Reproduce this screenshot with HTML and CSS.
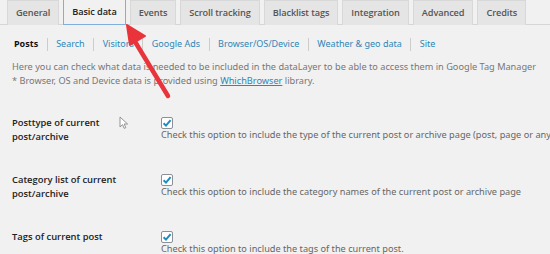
FILE: index.html
```html
<!DOCTYPE html>
<html>
<head>
<meta charset="utf-8">
<link rel="stylesheet" href="styles.css">
</head>
<body>
<div class="page">
  <nav class="tabs">
    <span class="tab">General</span>
    <span class="tab active">Basic data</span>
    <span class="tab">Events</span>
    <span class="tab">Scroll tracking</span>
    <span class="tab">Blacklist tags</span>
    <span class="tab">Integration</span>
    <span class="tab">Advanced</span>
    <span class="tab">Credits</span>
  </nav>
  <ul class="subnav">
    <li class="current">Posts</li>
    <li><a>Search</a></li>
    <li><a>Visitors</a></li>
    <li><a>Google Ads</a></li>
    <li><a>Browser/OS/Device</a></li>
    <li><a>Weather &amp; geo data</a></li>
    <li><a>Site</a></li>
  </ul>
  <p class="intro">Here you can check what data is needed to be included in the dataLayer to be able to access them in Google Tag Manager<br>* Browser, OS and Device data is provided using <a class="ul">WhichBrowser</a> library.</p>
  <div class="rows">
    <div class="row">
      <div class="label">Posttype of current post/archive</div>
      <div class="field">
        <span class="cb"><svg viewBox="0 0 12 12" width="12" height="12"><path d="M2.6 6.2 L5 8.6 L9.6 3.2" fill="none" stroke="#1e8cbe" stroke-width="2"/></svg></span>
        <span class="desc">Check this option to include the type of the current post or archive page (post, page or any custom post type)</span>
      </div>
    </div>
    <div class="row">
      <div class="label">Category list of current post/archive</div>
      <div class="field">
        <span class="cb"><svg viewBox="0 0 12 12" width="12" height="12"><path d="M2.6 6.2 L5 8.6 L9.6 3.2" fill="none" stroke="#1e8cbe" stroke-width="2"/></svg></span>
        <span class="desc">Check this option to include the category names of the current post or archive page</span>
      </div>
    </div>
    <div class="row">
      <div class="label">Tags of current post</div>
      <div class="field">
        <span class="cb"><svg viewBox="0 0 12 12" width="12" height="12"><path d="M2.6 6.2 L5 8.6 L9.6 3.2" fill="none" stroke="#1e8cbe" stroke-width="2"/></svg></span>
        <span class="desc">Check this option to include the tags of the current post.</span>
      </div>
    </div>
  </div>
  <svg class="cursor" width="10" height="14" viewBox="0 0 10 14"><path d="M1 1 L1 11 L3.5 8.6 L5.2 12.4 L6.8 11.7 L5.2 8 L8.6 8 Z" fill="#fff" stroke="#888" stroke-width="0.9" stroke-linejoin="round"/></svg>
  <svg class="arrow" width="70" height="90" viewBox="0 0 70 90"><line x1="48" y1="74" x2="14" y2="18" stroke="#e8343a" stroke-width="4.5" stroke-linecap="round"/><path d="M7 3 L25 14 L10 23 Z" fill="#e8343a" stroke="#e8343a" stroke-width="2" stroke-linejoin="round"/></svg>
</div>
</body>
</html>
```

FILE: styles.css
```css
* { box-sizing: border-box; }
html, body { margin: 0; padding: 0; }
body {
  background: #f1f1f1;
  font-family: "Noto Sans", "Open Sans", sans-serif;
  font-size: 10px;
  color: #444;
  width: 550px;
  height: 254px;
  overflow: hidden;
}
.page { position: relative; height: 254px; overflow: hidden; }
.tabs {
  display: flex;
  gap: 4px;
  padding-left: 7px;
  border-bottom: 1px solid #d6d6d6;
  height: 25px;
  align-items: flex-end;
}
.tab {
  flex-shrink: 0;
  display: block;
  white-space: nowrap;
  height: 25px;
  line-height: 24px;
  padding: 0 8px;
  background: #e5e5e5;
  border: 1px solid #d8d8d8;
  border-bottom: none;
  font-family: "Open Sans", "Noto Sans", sans-serif;
  font-weight: 600;
  font-size: 9.2px;
  letter-spacing: -0.1px;
  color: #555;
  margin-bottom: -1px;
}
.tab.active {
  background: #f1f1f1;
  color: #222;
  border: 1px solid #7fb0dd;
  height: 26px;
  line-height: 23px;
}
.subnav {
  list-style: none;
  margin: 0;
  padding: 12px 0 0 14px;
  display: flex;
  font-size: 9px;
  line-height: 14px;
  white-space: nowrap;
}
.subnav li { display: flex; align-items: center; }
.subnav li + li::before {
  content: "";
  display: inline-block;
  width: 1px;
  height: 13px;
  background: #ccc;
  margin: 0 8.5px;
}
.subnav li.current { font-weight: 700; color: #111; }
.subnav a { color: #2f86b8; }
.intro {
  margin: 9px 0 0 12px;
  font-size: 9.2px;
  line-height: 14px;
  color: #777;
  white-space: nowrap;
}
.intro .ul { color: #2f86b8; text-decoration: underline; }
.rows { margin-top: 28px; padding-left: 12px; }
.row {
  display: flex;
  height: 57px;
}
.label {
  flex-shrink: 0;
  width: 149px;
  font-weight: 600;
  font-family: "Open Sans", "Noto Sans", sans-serif;
  font-size: 9.4px;
  line-height: 14px;
  color: #222;
  padding-right: 35px;
}
.field { display: flex; flex-direction: column; padding-top: 1px; }
.cb {
  width: 12px;
  height: 12px;
  border: 1px solid #8c8f94;
  border-radius: 2px;
  background: #fff;
  display: block;
}
.cb svg { display: block; margin: -1px; }
.desc {
  font-size: 9.2px;
  line-height: 12px;
  color: #666;
  white-space: nowrap;
}
.cursor { position: absolute; left: 119px; top: 116px; }
.arrow { position: absolute; left: 120px; top: 22px; }
```
